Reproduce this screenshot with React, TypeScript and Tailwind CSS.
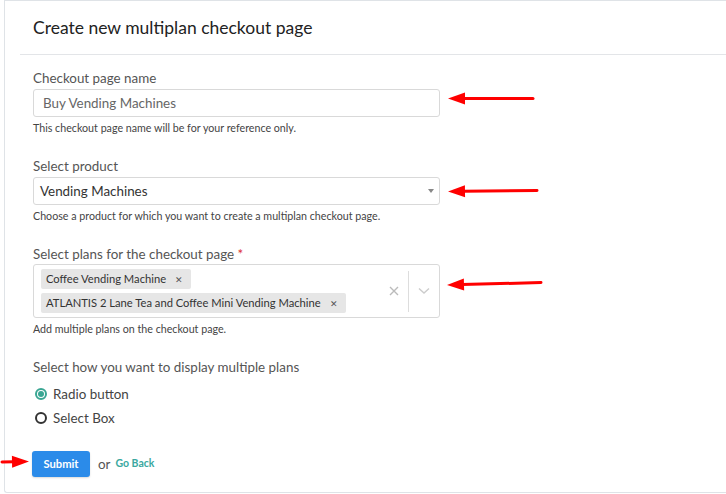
import { useState } from 'react'

function Arrow({ x1, y1, x2, y2 }: { x1: number; y1: number; x2: number; y2: number }) {
  // arrow head at (x2, y2)
  const dx = x2 - x1
  const dy = y2 - y1
  const len = Math.sqrt(dx * dx + dy * dy)
  const ux = dx / len
  const uy = dy / len
  const hx = x2 - ux * 17
  const hy = y2 - uy * 17
  const px = -uy * 6
  const py = ux * 6
  return (
    <g>
      <line x1={x1} y1={y1} x2={hx + ux * 2} y2={hy + uy * 2} stroke="#f00" strokeWidth={3} strokeLinecap="round" />
      <polygon points={`${x2},${y2} ${hx + px},${hy + py} ${hx - px},${hy - py}`} fill="#f00" />
    </g>
  )
}

export default function App() {
  const [mode, setMode] = useState<'radio' | 'select'>('radio')
  const [plans, setPlans] = useState(['Coffee Vending Machine', 'ATLANTIS 2 Lane Tea and Coffee Mini Vending Machine'])

  return (
    <div
      className="relative w-[726px] h-[494px] overflow-hidden bg-white pl-[4px]"
      style={{ fontFamily: 'Lato, "Open Sans", sans-serif' }}
    >
      <div className="w-[740px] h-[493px] border-l border-t border-b border-[#dfe3e7] rounded-bl-[3px] bg-white">
        {/* Header */}
        <div className="ml-[15px] h-[54px] border-b border-[#e3e5e8] pl-[13px] flex items-center">
          <h1 className="text-[17.5px] text-[#222] mt-[2px]">Create new multiplan checkout page</h1>
        </div>

        <div className="pl-[28px] pt-[15px] w-[435px]">
          {/* Checkout page name */}
          <label className="block text-[13.4px] leading-4 text-[#555]">Checkout page name</label>
          <div className="mt-[3px] h-[28px] border border-[#d9d9d9] rounded-[3px] flex items-center px-[9px] text-[13.4px] text-[#666]">
            Buy Vending Machines
          </div>
          <p className="mt-[4px] text-[10.7px] leading-[14px] text-[#444]">This checkout page name will be for your reference only.</p>

          {/* Select product */}
          <label className="block mt-[23px] text-[13.4px] leading-4 text-[#555]">Select product</label>
          <div className="mt-[3px] h-[28px] border border-[#d9d9d9] rounded-[3px] flex items-center pl-[6px] pr-[5px] text-[13.4px] text-[#333]">
            <span className="flex-1">Vending Machines</span>
            <span className="w-0 h-0 border-l-[3.5px] border-r-[3.5px] border-t-[4px] border-l-transparent border-r-transparent border-t-[#888]" />
          </div>
          <p className="mt-[4px] text-[10.7px] leading-[14px] text-[#444]">Choose a product for which you want to create a multiplan checkout page.</p>

          {/* Select plans */}
          <label className="block mt-[23px] text-[13.4px] leading-4 text-[#555]">
            Select plans for the checkout page <span className="text-[#d33]">*</span>
          </label>
          <div className="mt-[2px] h-[54px] border border-[#d9d9d9] rounded-[3px] flex">
            <div className="flex-1 flex flex-col items-start gap-[4px] pl-[7px] pt-[4px]">
              {plans.map((p) => (
                <span
                  key={p}
                  className="h-[20px] bg-[#e6e6e6] rounded-[2px] flex items-center pl-[5px] pr-[8px] text-[11.2px] text-[#333]"
                >
                  {p}
                  <button
                    onClick={() => setPlans(plans.filter((x) => x !== p))}
                    className="ml-[9px] text-[9px] text-[#555] leading-none cursor-pointer"
                  >
                    ✕
                  </button>
                </span>
              ))}
            </div>
            <div className="flex items-center">
              <svg width="10" height="10" viewBox="0 0 10 10" className="mr-[9px]">
                <path d="M1 1L9 9M9 1L1 9" stroke="#bbb" strokeWidth="1.4" />
              </svg>
              <div className="w-px h-[41px] bg-[#ddd]" />
              <svg width="12" height="8" viewBox="0 0 12 8" className="mx-[9px]">
                <path d="M1 1.5L6 6L11 1.5" stroke="#ccc" strokeWidth="1.4" fill="none" />
              </svg>
            </div>
          </div>
          <p className="mt-[4px] text-[10.7px] leading-[14px] text-[#444]">Add multiple plans on the checkout page.</p>

          {/* Display mode */}
          <label className="block mt-[23px] text-[13.4px] leading-4 text-[#555]">Select how you want to display multiple plans</label>
          <div className="mt-[11px] flex flex-col gap-[8px]">
            <button onClick={() => setMode('radio')} className="ml-[2px] flex items-center gap-[6px] h-[16px] cursor-pointer">
              <span
                className={
                  mode === 'radio'
                    ? 'w-[12px] h-[12px] rounded-full border-2 border-[#3aa693] flex items-center justify-center'
                    : 'w-[12px] h-[12px] rounded-full border-2 border-[#333]'
                }
              >
                {mode === 'radio' && <span className="w-[6px] h-[6px] rounded-full bg-[#3aa693]" />}
              </span>
              <span className="text-[13.4px] text-[#444]">Radio button</span>
            </button>
            <button onClick={() => setMode('select')} className="ml-[2px] flex items-center gap-[6px] h-[16px] cursor-pointer">
              <span
                className={
                  mode === 'select'
                    ? 'w-[12px] h-[12px] rounded-full border-2 border-[#3aa693] flex items-center justify-center'
                    : 'w-[12px] h-[12px] rounded-full border-2 border-[#333]'
                }
              >
                {mode === 'select' && <span className="w-[6px] h-[6px] rounded-full bg-[#3aa693]" />}
              </span>
              <span className="text-[13.4px] text-[#444]">Select Box</span>
            </button>
          </div>

          {/* Actions */}
          <div className="mt-[25px] flex items-center">
            <button className="ml-[-1px] w-[58px] h-[26px] rounded-[3px] bg-[#2b8be9] text-white text-[11.2px] font-bold shadow-[0_1px_2px_rgba(0,0,0,0.15)]">
              Submit
            </button>
            <span className="ml-[8px] text-[13.4px] text-[#555]">or</span>
            <a className="ml-[5px] text-[10.5px] font-bold text-[#3aa8a0] cursor-pointer">Go Back</a>
          </div>
        </div>
      </div>

      {/* Annotation arrows */}
      <svg className="absolute left-0 top-0 pointer-events-none" width="726" height="494">
        <Arrow x1={533} y1={98.5} x2={448} y2={98.5} />
        <Arrow x1={537} y1={190.5} x2={448} y2={191.5} />
        <Arrow x1={541} y1={282.5} x2={447} y2={285} />
        <Arrow x1={2} y1={462} x2={29} y2={461.5} />
      </svg>
    </div>
  )
}
